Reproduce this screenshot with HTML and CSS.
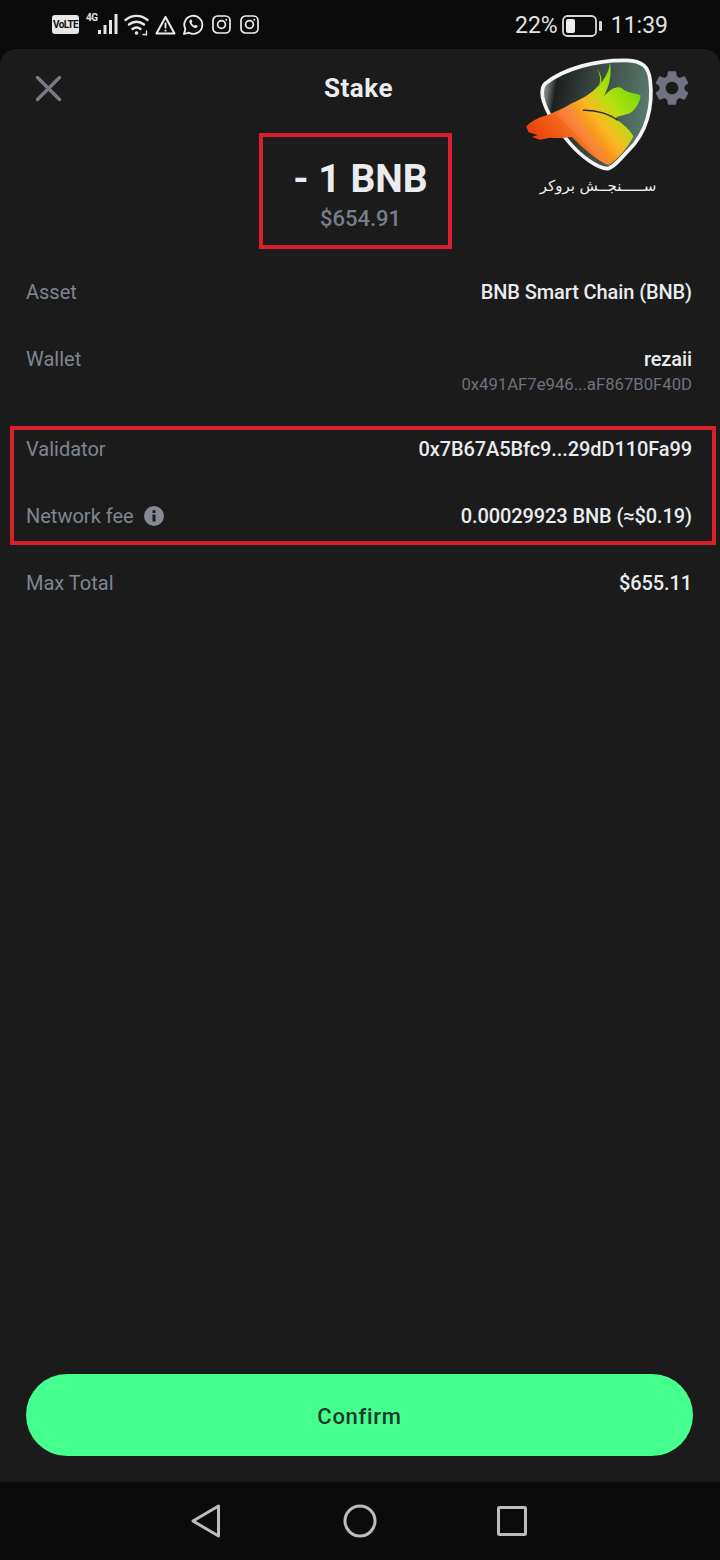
FILE: index.html
```html
<!DOCTYPE html>
<html lang="en">
<head>
<meta charset="UTF-8">
<meta name="viewport" content="width=device-width, initial-scale=1.0">
<title>Stake</title>
<link rel="stylesheet" href="styles.css">
</head>
<body>
<div class="status-bar">
  <div class="status-left">
    <span class="volte">VoLTE</span>
    <div class="signal">
      <span class="net">4G</span>
      <svg width="22" height="21" viewBox="0 0 22 21"><path d="M1 16h3v4H1zM6.500 11h3v9h-3zM12 6h3v14h-3zM17.500 0h3v20h-3z" fill="#e6e6e6"/></svg>
    </div>
    <svg class="wifi" width="26" height="22" viewBox="0 0 26 22" fill="none" stroke="#e6e6e6" stroke-width="2.400" stroke-linecap="round"><path d="M1.500 6C8 .5 17 .5 23.500 6"/><path d="M5 10.500c4.500-3.700 10.500-3.700 15 0"/><path d="M8.500 15c2.500-2 5.500-2 8 0"/><circle cx="12.500" cy="19" r="1.800" fill="#e6e6e6" stroke="none"/><path d="M19 20.500h3M22.500 17v4" stroke-width="1.300"/></svg>
    <svg class="warn" width="21" height="20" viewBox="0 0 21 20" fill="none"><path d="M10.500 2 19.500 18.500H1.500Z" stroke="#eee" stroke-width="2" stroke-linejoin="round"/><path d="M10.500 7.500v6M10.500 14.800v1.600" stroke="#eee" stroke-width="1.800"/></svg>
    <svg class="wa" width="21" height="21" viewBox="0 0 21 21" fill="none"><path d="M1 20l1.400-4.900A9 9 0 1 1 6 18.700Z" stroke="#eee" stroke-width="1.800" stroke-linejoin="round"/><path d="M7.200 5.800c-1.300 1-1.200 2.700.3 4.700s3.300 3.500 5 3.500c1.300 0 2.300-1 2.200-1.900l-2.200-1.300-1 1c-1.200-.4-2.500-1.800-3-3l.9-1-1-2.200Z" fill="#eee"/></svg>
    <svg class="ig" width="19" height="19" viewBox="0 0 19 19" fill="none" stroke="#eee" stroke-width="1.700"><rect x="1" y="1" width="17" height="17" rx="4.500"/><circle cx="9.500" cy="9.500" r="3.900"/><circle cx="14.300" cy="4.700" r="1" fill="#eee" stroke="none"/></svg>
    <svg class="ig" width="19" height="19" viewBox="0 0 19 19" fill="none" stroke="#eee" stroke-width="1.700"><rect x="1" y="1" width="17" height="17" rx="4.500"/><circle cx="9.500" cy="9.500" r="3.900"/><circle cx="14.300" cy="4.700" r="1" fill="#eee" stroke="none"/></svg>
  </div>
  <div class="status-right">
    <span>22%</span>
    <svg class="battery" width="41" height="22" viewBox="0 0 41 22" fill="none"><rect x="1" y="1" width="33" height="20" rx="4.500" stroke="#d8d8d8" stroke-width="1.800"/><rect x="4" y="4" width="9" height="14" rx="2" fill="#eee"/><rect x="37" y="6" width="3" height="10" rx="1.200" fill="#d8d8d8"/></svg>
    <span class="time">11:39</span>
  </div>
</div>

<div class="sheet">
  <div class="header">
    <svg class="close" width="27" height="27" viewBox="0 0 27 27" stroke="#777b82" stroke-width="3.400" stroke-linecap="round"><path d="M2.500 2.500 24.500 24.500M24.500 2.500 2.500 24.500"/></svg>
    <h1>Stake</h1>
    <svg class="gear" width="42" height="42" viewBox="0 0 24 24"><path fill="#6f7480" d="M19.140 12.940c.04-.3.06-.61.06-.94 0-.32-.02-.64-.07-.94l2.030-1.580c.18-.14.23-.41.12-.61l-1.920-3.320c-.12-.22-.37-.29-.59-.22l-2.390.96c-.5-.38-1.030-.7-1.620-.94l-.36-2.540c-.04-.24-.24-.41-.48-.41h-3.840c-.24 0-.43.17-.47.41l-.36 2.540c-.59.24-1.130.57-1.620.94l-2.390-.96c-.22-.08-.47 0-.59.22L2.740 8.870c-.12.21-.08.47.12.61l2.030 1.580c-.05.3-.09.63-.09.94s.02.64.07.94l-2.030 1.580c-.18.14-.23.41-.12.61l1.920 3.320c.12.22.37.29.59.22l2.390-.96c.5.38 1.030.7 1.620.94l.36 2.540c.05.24.24.41.48.41h3.840c.24 0 .44-.17.47-.41l.36-2.540c.59-.24 1.130-.56 1.620-.94l2.390.96c.22.08.47 0 .59-.22l1.920-3.320c.12-.22.07-.47-.12-.61l-2.010-1.580zM12 15.600c-1.980 0-3.600-1.620-3.600-3.600s1.620-3.600 3.600-3.600 3.600 1.620 3.600 3.600-1.620 3.600-3.600 3.600z"/></svg>
  </div>

  <div class="amount-box">
    <div class="amount">- 1 BNB</div>
    <div class="amount-usd">$654.91</div>
  </div>

  <div class="row row-asset">
    <span class="label">Asset</span>
    <span class="value">BNB Smart Chain (BNB)</span>
  </div>
  <div class="row row-wallet">
    <span class="label">Wallet</span>
    <div class="value-stack">
      <span class="value">rezaii</span>
      <span class="address">0x491AF7e946...aF867B0F40D</span>
    </div>
  </div>

  <div class="highlight">
    <div class="row">
      <span class="label">Validator</span>
      <span class="value">0x7B67A5Bfc9...29dD110Fa99</span>
    </div>
    <div class="row">
      <span class="label label-info">Network fee
        <svg width="20" height="20" viewBox="0 0 20 20"><circle cx="10" cy="10" r="10" fill="#858a94"/><path d="M8.500 8.500h3v7h-3zM8.500 4.200h3v2.800h-3z" fill="#1b1b1c"/></svg>
      </span>
      <span class="value">0.00029923 BNB (≈$0.19)</span>
    </div>
  </div>

  <div class="row row-total">
    <span class="label">Max Total</span>
    <span class="value">$655.11</span>
  </div>

  <button class="confirm" type="button">Confirm</button>

  <!-- watermark sits over the header -->
  <div class="logo">
    <svg width="132" height="115" viewBox="75 170 395 345">
      <defs>
        <linearGradient id="shieldFill" x1="130" y1="250" x2="450" y2="300" gradientUnits="userSpaceOnUse">
          <stop offset="0" stop-color="#a3a3a3"/>
          <stop offset=".12" stop-color="#1d2020"/>
          <stop offset=".45" stop-color="#39443f"/>
          <stop offset="1" stop-color="#587a6c"/>
        </linearGradient>
        <linearGradient id="animalFill" x1="120" y1="470" x2="400" y2="250" gradientUnits="userSpaceOnUse">
          <stop offset="0" stop-color="#e8380a"/>
          <stop offset=".3" stop-color="#f2641a"/>
          <stop offset=".58" stop-color="#fbb822"/>
          <stop offset=".75" stop-color="#b6e010"/>
          <stop offset=".95" stop-color="#80dc08"/>
        </linearGradient>
      </defs>
      <path d="M135 250C190 205 290 178 380 180C425 182 445 197 450 240C460 320 438 400 385 450C360 478 335 506 320 505C290 502 245 470 210 430C170 385 135 330 127 290C124 270 127 258 135 250Z" fill="url(#shieldFill)" stroke="#f5f5f5" stroke-width="11"/>
      <path d="M78 378C100 358 120 350 140 345C160 335 190 325 212 310C250 295 280 275 305 245C320 225 330 205 328 180C338 225 325 262 310 290C330 265 355 252 370 268C390 280 410 278 421 285C422 300 405 335 385 340C370 345 352 345 345 355C370 370 390 390 400 408C385 440 350 480 325 495C290 480 250 445 215 410C195 412 170 415 150 412L120 418L95 410L113 404L85 396Z" fill="url(#animalFill)"/>
      <path d="M290 205C306 225 310 247 292 270C302 248 303 225 290 205Z" fill="#8fd80c"/>
      <path d="M170 340 212 312 330 492 300 482Z" fill="#ff8a6a" fill-opacity=".35"/>
      <path d="M248 330C290 328 330 343 352 360" fill="none" stroke="#2a2a1f" stroke-width="4"/>
    </svg>
    <span class="logo-name">ســـــنجــش بروکر</span>
  </div>
</div>

<div class="nav-bar">
  <svg width="30" height="34" viewBox="0 0 30 34" fill="none" stroke="#bdbdbd" stroke-width="3" stroke-linejoin="round"><path d="M27.500 2V32L2 17Z"/></svg>
  <svg class="nav-home" width="34" height="34" viewBox="0 0 34 34" fill="none" stroke="#bdbdbd" stroke-width="3"><circle cx="17" cy="17" r="15"/></svg>
  <svg width="30" height="30" viewBox="0 0 30 30" fill="none" stroke="#bdbdbd" stroke-width="3" stroke-linejoin="round"><rect x="1.500" y="1.500" width="27" height="27" rx="1"/></svg>
</div>
</body>
</html>
```

FILE: styles.css
```css
body {
  font-family: Roboto, 'Noto Sans', sans-serif;
  margin: 0;
  padding: 0;
  width: 720px;
  height: 1560px;
  display: flex;
  flex-direction: column;
  background-color: #0b0b0c;
  overflow: hidden;
}

/* Status bar */
.status-bar {
  height: 49px;
  display: flex;
  justify-content: space-between;
  align-items: center;
  padding: 0 52px;
  color: #e2e2e2;
  font-size: 23px;
  flex-shrink: 0;
}
.status-left {
  display: flex;
  align-items: center;
}
.status-right {
  display: flex;
  align-items: center;
  margin-top: 2px;
}
.volte {
  width: 27px;
  height: 19px;
  line-height: 19px;
  background-color: #e6e6e6;
  color: #111;
  border-radius: 3px;
  font-size: 10px;
  font-weight: 700;
  text-align: center;
  letter-spacing: -0.6px;
  margin-right: 7px;
}
.signal {
  display: flex;
  align-items: flex-end;
  position: relative;
  padding-left: 11px;
  margin-right: 5px;
}
.net {
  position: absolute;
  left: 0;
  top: -2px;
  font-size: 10px;
  font-weight: 700;
  line-height: 12px;
  letter-spacing: -0.5px;
}
.wifi {
  margin-right: 5px;
}
.warn {
  margin-right: 7px;
}
.wa {
  margin-right: 8px;
}
.ig {
  margin-right: 9px;
}
.battery {
  margin: 0 8px 0 4px;
}

/* Sheet */
.sheet {
  flex: 1;
  position: relative;
  display: flex;
  flex-direction: column;
  background-color: #1b1b1c;
  border-radius: 16px 16px 0 0;
  padding: 0 28px 26px 26px;
}
.header {
  height: 78px;
  margin: 0 -1px 6px -2px;
  display: grid;
  grid-template-columns: 1fr auto 1fr;
  align-items: center;
  flex-shrink: 0;
}
.close {
  margin: 1px 0 0 11px;
}
.gear {
  justify-self: end;
  margin-top: -1px;
}
h1 {
  margin: 0;
  font-size: 26px;
  font-weight: 700;
  letter-spacing: 0.5px;
  color: #eaecef;
}

/* Amount */
.amount-box {
  box-sizing: border-box;
  width: 193px;
  height: 116px;
  margin: 0 0 31px 233px;
  padding: 19px 0 0 10px;
  border: 4px solid #d8202c;
  text-align: center;
}
.amount {
  font-size: 39px;
  line-height: 46px;
  font-weight: 700;
  color: #eaecef;
}
.amount-usd {
  font-size: 22px;
  line-height: 26px;
  margin-top: 4px;
  font-weight: 500;
  color: #777e89;
}

/* Rows */
.row {
  display: flex;
  justify-content: space-between;
  align-items: flex-start;
  font-size: 20px;
  line-height: 24px;
}
.label {
  color: #7f8690;
}
.label-info {
  display: flex;
  align-items: center;
  gap: 10px;
}
.value {
  color: #eaecef;
  font-weight: 500;
  letter-spacing: -0.1px;
}
.value-stack {
  display: flex;
  flex-direction: column;
  align-items: flex-end;
}
.address {
  font-size: 16.700px;
  line-height: 20px;
  margin-top: 4px;
  color: #6c727c;
}
.row-asset {
  margin-bottom: 43px;
}
.row-wallet {
  margin-bottom: 31px;
}
.highlight {
  display: flex;
  flex-direction: column;
  gap: 43px;
  margin: 0 -24px 26px -16px;
  padding: 7px 20px 13px 12px;
  border: 4px solid #d8202c;
}
.confirm {
  height: 82px;
  margin-top: auto;
  margin-right: -1px;
  padding-top: 4px;
  border: none;
  border-radius: 41px;
  background-color: #45ff8f;
  color: #1e3a2a;
  font-family: inherit;
  font-size: 22px;
  font-weight: 500;
  letter-spacing: 0.7px;
}

/* Watermark */
.logo {
  position: absolute;
  left: 525px;
  top: 8px;
  width: 132px;
  display: flex;
  flex-direction: column;
  align-items: center;
}
.logo-name {
  font-family: 'DejaVu Sans', sans-serif;
  font-size: 15px;
  line-height: 18px;
  color: #f0f0f0;
  margin-top: 5px;
  margin-left: 14px;
  white-space: nowrap;
}

/* Navigation bar */
.nav-bar {
  height: 78px;
  flex-shrink: 0;
  display: flex;
  justify-content: center;
  align-items: center;
  gap: 121px;
  padding-right: 2px;
  background-color: #0b0b0c;
}
.nav-home {
  margin: 0 -1px 0 1px;
}
```
